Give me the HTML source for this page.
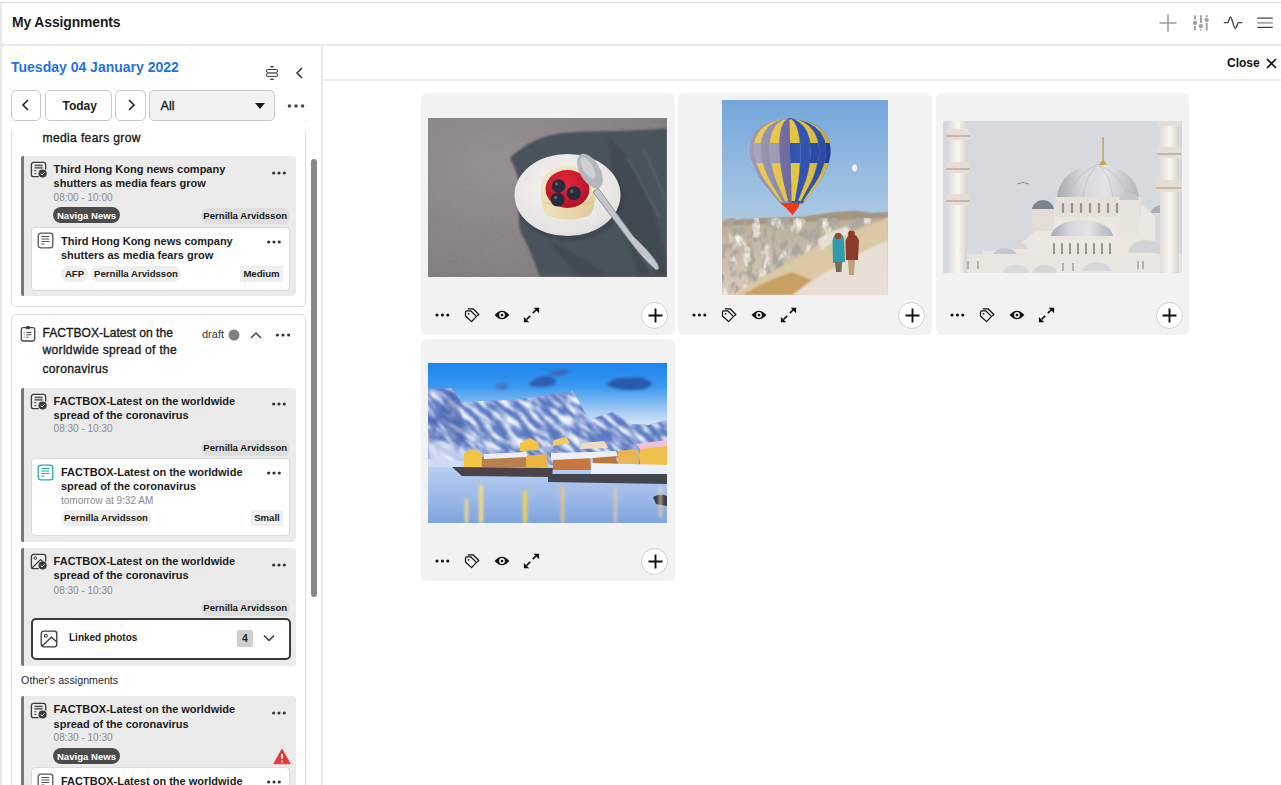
<!DOCTYPE html><html><head><meta charset="utf-8"><style>
html,body{margin:0;padding:0;}
body{width:1281px;height:785px;position:relative;overflow:hidden;background:#eaeaea;font-family:"Liberation Sans",sans-serif;}
.t{position:absolute;white-space:nowrap;}
.m{-webkit-text-stroke:0.35px currentColor;}
.b{position:absolute;box-sizing:border-box;}
</style></head><body>
<div class="b" style="left:0px;top:0px;width:1281px;height:2px;background:#fff"></div>
<div class="b" style="left:0px;top:2px;width:1281px;height:1px;background:#dcdcdc"></div>
<div class="b" style="left:2px;top:3px;width:1279px;height:41px;background:#fff;border-radius:0 0 0 3px"></div>
<div class="t " style="left:12px;top:14.24px;font-size:13.9px;line-height:16.68px;font-weight:700;color:#1c1c1c;letter-spacing:-0.1px">My Assignments</div>
<svg class="b" style="left:1158px;top:13px;" width="20" height="20" viewBox="0 0 20 20"><path d="M10 1.5V18.5M1.5 10H18.5" stroke="#9a9a9a" fill="none" stroke-width="1.6"/></svg>
<svg class="b" style="left:1192px;top:14px;" width="18" height="18" viewBox="0 0 18 18"><path d="M3 1.2V5.8M3 12.0V16.6" stroke="#a3a3a3" stroke-width="2"/><circle cx="3" cy="8.9" r="2.15" fill="#a3a3a3"/><path d="M8.9 1.2V9.1M8.9 15.3V16.6" stroke="#a3a3a3" stroke-width="2"/><circle cx="8.9" cy="12.2" r="2.15" fill="#a3a3a3"/><path d="M14.7 1.2V2.9M14.7 9.1V16.6" stroke="#a3a3a3" stroke-width="2"/><circle cx="14.7" cy="6" r="2.15" fill="#a3a3a3"/></svg>
<svg class="b" style="left:1223px;top:15px;" width="20" height="16" viewBox="0 0 20 16"><path d="M1.3 7.6H4.6C5.6 7.6 6.4 2 7.6 2C8.8 2 11 13.7 12.3 13.7C13.4 13.7 14.4 7.6 15.4 7.6H18.9" stroke="#444" fill="none" stroke-width="1.4" stroke-linecap="round"/></svg>
<svg class="b" style="left:1256px;top:16px;" width="18" height="14" viewBox="0 0 18 14"><path d="M1.2 2.2H16.8M1.2 11.4H16.8" stroke="#444" fill="none" stroke-width="1.3"/><path d="M1.2 6.8H16.8" stroke="#aaa" fill="none" stroke-width="2"/></svg>
<div class="b" style="left:2px;top:46px;width:319px;height:739px;background:#fff;border-radius:3px 3px 0 0"></div>
<div class="b" style="left:323px;top:46px;width:958px;height:739px;background:#fff;border-radius:3px 0 0 0"></div>
<div class="b" style="left:323px;top:79px;width:958px;height:2px;background:#ebebeb"></div>
<div class="t " style="left:1227px;top:55.84px;font-size:12px;line-height:14.4px;font-weight:700;color:#111;">Close</div>
<svg class="b" style="left:1266px;top:58px;" width="11" height="11" viewBox="0 0 11 11"><path d="M1 1L10 10M10 1L1 10" stroke="#111" stroke-width="1.7"/></svg>
<div class="t " style="left:11px;top:58.55px;font-size:14px;line-height:16.8px;font-weight:700;color:#2372e0;">Tuesday 04 January 2022</div>
<svg class="b" style="left:265px;top:65px;" width="14" height="16" viewBox="0 0 14 16"><path d="M4.5 1H9.5L7 3Z" fill="#444"/><path d="M4.5 15H9.5L7 13Z" fill="#444"/><rect x="1.5" y="4.5" width="11" height="3" rx="1.5" fill="none" stroke="#444" stroke-width="1.1"/><rect x="1.5" y="8.5" width="11" height="3" rx="1.5" fill="none" stroke="#444" stroke-width="1.1"/><rect x="2.5" y="7.3" width="9" height="1.4" fill="#999"/></svg>
<svg class="b" style="left:294px;top:66px;" width="10" height="14" viewBox="0 0 10 14"><path d="M8 2L3 7L8 12" fill="none" stroke="#333" stroke-width="1.5"/></svg>
<div class="b" style="left:11px;top:90px;width:30px;height:31px;background:#fff;border:1px solid #c8c8c8;border-radius:5px"></div>
<svg class="b" style="left:19px;top:98px;" width="14" height="14" viewBox="0 0 14 14"><path d="M9 2L4 7L9 12" fill="none" stroke="#222" stroke-width="1.6"/></svg>
<div class="b" style="left:45px;top:90px;width:67px;height:31px;background:#fff;border:1px solid #c8c8c8;border-radius:5px"></div>
<div class="t " style="left:62.5px;top:98.64px;font-size:12px;line-height:14.4px;font-weight:700;color:#1c1c1c;">Today</div>
<div class="b" style="left:115px;top:90px;width:31px;height:31px;background:#fff;border:1px solid #c8c8c8;border-radius:5px"></div>
<svg class="b" style="left:124px;top:98px;" width="14" height="14" viewBox="0 0 14 14"><path d="M5 2L10 7L5 12" fill="none" stroke="#222" stroke-width="1.6"/></svg>
<div class="b" style="left:149px;top:90px;width:126px;height:31px;background:#f2f2f2;border:1px solid #c8c8c8;border-radius:5px"></div>
<div class="t m" style="left:160.5px;top:98.88px;font-size:12.7px;line-height:15.24px;font-weight:400;color:#1c1c1c;">All</div>
<svg class="b" style="left:254px;top:102px;" width="12" height="8" viewBox="0 0 12 8"><path d="M1 1H11L6 7Z" fill="#1a1a1a"/></svg>
<svg class="b" style="left:286px;top:100.7px;" width="20" height="10" viewBox="0 0 20 10"><circle cx="3.4000000000000004" cy="5" r="1.7" fill="#444"/><circle cx="10.0" cy="5" r="1.7" fill="#444"/><circle cx="16.6" cy="5" r="1.7" fill="#444"/></svg>
<div class="b" style="left:11px;top:120px;width:295px;height:187px;border:1px solid #dcdcdc;border-top:none;border-radius:0 0 5px 5px"></div>
<div class="b" style="left:2px;top:121px;width:319px;height:10px;background:#fff"></div>
<div class="t m" style="left:42.5px;top:130.95px;font-size:12.1px;line-height:14.52px;font-weight:400;color:#1c1c1c;letter-spacing:0.35px">media fears grow</div>
<div class="b" style="left:21px;top:156px;width:275px;height:140px;background:#ebebeb;border-left:3px solid #777;border-radius:2px 4px 4px 2px"></div>
<svg class="b" style="left:29.8px;top:160.9px;" width="17" height="17" viewBox="0 0 17 17"><path d="M8.6 15.7H3.7A2.3 2.3 0 0 1 1.4 13.4V3.7A2.3 2.3 0 0 1 3.7 1.4H13.4A2.3 2.3 0 0 1 15.7 3.7V8.6" fill="none" stroke="#3a3a3a" stroke-width="1.3"/><path d="M4.5 4.4H12.6" stroke="#555" stroke-width="1.5"/><path d="M4.5 6.9H12.6M4.5 9.8H6.3M4.5 12.5H6.3" stroke="#3a3a3a" stroke-width="1.1"/><circle cx="12.6" cy="12.5" r="4.1" fill="#3a3a3a"/><path d="M10.7 12.6L12.1 13.9L14.5 11.3" fill="none" stroke="#fff" stroke-width="0.9"/></svg>
<div class="t " style="left:53.6px;top:163.19px;font-size:11px;line-height:13.2px;font-weight:700;color:#1c1c1c;">Third Hong Kong news company</div>
<div class="t " style="left:53.6px;top:177.09px;font-size:11px;line-height:13.2px;font-weight:700;color:#1c1c1c;">shutters as media fears grow</div>
<svg class="b" style="left:269px;top:167.7px;" width="20" height="10" viewBox="0 0 20 10"><circle cx="4.7" cy="5" r="1.6" fill="#333"/><circle cx="10.0" cy="5" r="1.6" fill="#333"/><circle cx="15.3" cy="5" r="1.6" fill="#333"/></svg>
<div class="t " style="left:53.6px;top:192.13px;font-size:10px;line-height:12.0px;font-weight:400;color:#8a8a8a;">08:00 - 10:00</div>
<div class="b" style="left:53px;top:207px;width:67px;height:16px;background:#4b4b4b;border-radius:8px"></div>
<div class="t" style="left:53px;top:207.7px;width:67px;height:16px;line-height:16px;text-align:center;font-size:9.6px;font-weight:700;color:#fff">Naviga News</div>
<div class="b" style="left:200.5px;top:207.5px;width:89.5px;height:16.0px;background:#dedede;border-radius:8px"></div>
<div class="t" style="left:200.5px;top:208.2px;width:89.5px;height:16px;line-height:16px;text-align:center;font-size:9.6px;font-weight:700;color:#1c1c1c">Pernilla Arvidsson</div>
<div class="b" style="left:31px;top:226.5px;width:259px;height:64.0px;background:#fff;border:1px solid #dadada;border-radius:4px"></div>
<svg class="b" style="left:36.7px;top:232px;" width="17" height="17" viewBox="0 0 17 17"><rect x="1.2" y="1.2" width="14.6" height="14.6" rx="2.6" fill="none" stroke="#555" stroke-width="1.3"/><path d="M4.3 4.5H12.3M4.3 7H12.3M4.3 9.5H12.3M4.3 12H7.5" stroke="#555" stroke-width="1.1"/></svg>
<div class="t " style="left:61px;top:235.19px;font-size:11px;line-height:13.2px;font-weight:700;color:#1c1c1c;">Third Hong Kong news company</div>
<div class="t " style="left:61px;top:249.39px;font-size:11px;line-height:13.2px;font-weight:700;color:#1c1c1c;">shutters as media fears grow</div>
<svg class="b" style="left:263.5px;top:237px;" width="20" height="10" viewBox="0 0 20 10"><circle cx="4.7" cy="5" r="1.6" fill="#333"/><circle cx="10.0" cy="5" r="1.6" fill="#333"/><circle cx="15.3" cy="5" r="1.6" fill="#333"/></svg>
<div class="b" style="left:61px;top:265.5px;width:27px;height:16.0px;background:#eeeeee;border-radius:8px"></div>
<div class="t" style="left:61px;top:266.2px;width:27px;height:16px;line-height:16px;text-align:center;font-size:9.6px;font-weight:700;color:#1c1c1c">AFP</div>
<div class="b" style="left:91px;top:265.5px;width:90px;height:16.0px;background:#eeeeee;border-radius:8px"></div>
<div class="t" style="left:91px;top:266.2px;width:90px;height:16px;line-height:16px;text-align:center;font-size:9.6px;font-weight:700;color:#1c1c1c">Pernilla Arvidsson</div>
<div class="b" style="left:240px;top:265.5px;width:43px;height:16.0px;background:#eeeeee;border-radius:0px"></div>
<div class="t" style="left:240px;top:266.2px;width:43px;height:16px;line-height:16px;text-align:center;font-size:9.6px;font-weight:700;color:#1c1c1c">Medium</div>
<div class="b" style="left:11px;top:314px;width:295px;height:486px;border:1px solid #dcdcdc;border-radius:5px"></div>
<svg class="b" style="left:20px;top:325px;" width="16" height="17" viewBox="0 0 16 17"><rect x="1.3" y="2.6" width="13.4" height="13.4" rx="1.8" fill="none" stroke="#444" stroke-width="1.3"/><rect x="6" y="1" width="4" height="3.2" rx="1" fill="#444"/><path d="M6.3 7.5H11.3M6.3 9.8H11.3M6.3 12.2H8.5" stroke="#444" stroke-width="1.1"/><path d="M3.6 7.5H5M3.6 9.8H5M3.6 12.2H5" stroke="#999" stroke-width="1"/></svg>
<div class="t m" style="left:42.5px;top:323.51px;font-size:12.1px;line-height:18px;font-weight:400;color:#1c1c1c;">FACTBOX-Latest on the</div>
<div class="t m" style="left:42.5px;top:341.41px;font-size:12.1px;line-height:18px;font-weight:400;color:#1c1c1c;letter-spacing:0.3px">worldwide spread of the</div>
<div class="t m" style="left:42.5px;top:359.51px;font-size:12.1px;line-height:18px;font-weight:400;color:#1c1c1c;letter-spacing:0.3px">coronavirus</div>
<div class="t " style="left:202px;top:327.59px;font-size:11px;line-height:13.2px;font-weight:400;color:#333;">draft</div>
<svg class="b" style="left:227.5px;top:329px;" width="12" height="12" viewBox="0 0 12 12"><circle cx="6" cy="6" r="5.5" fill="#7f7f7f"/></svg>
<svg class="b" style="left:249px;top:329px;" width="14" height="11" viewBox="0 0 14 11"><path d="M2 9L7 4L12 9" fill="none" stroke="#444" stroke-width="1.5"/></svg>
<svg class="b" style="left:273px;top:329.6px;" width="20" height="10" viewBox="0 0 20 10"><circle cx="4.4" cy="5" r="1.6" fill="#333"/><circle cx="10.0" cy="5" r="1.6" fill="#333"/><circle cx="15.6" cy="5" r="1.6" fill="#333"/></svg>
<div class="b" style="left:21px;top:387.5px;width:275px;height:154.0px;background:#ebebeb;border-left:3px solid #777;border-radius:2px 4px 4px 2px"></div>
<svg class="b" style="left:29.8px;top:392.9px;" width="17" height="17" viewBox="0 0 17 17"><path d="M8.6 15.7H3.7A2.3 2.3 0 0 1 1.4 13.4V3.7A2.3 2.3 0 0 1 3.7 1.4H13.4A2.3 2.3 0 0 1 15.7 3.7V8.6" fill="none" stroke="#3a3a3a" stroke-width="1.3"/><path d="M4.5 4.4H12.6" stroke="#555" stroke-width="1.5"/><path d="M4.5 6.9H12.6M4.5 9.8H6.3M4.5 12.5H6.3" stroke="#3a3a3a" stroke-width="1.1"/><circle cx="12.6" cy="12.5" r="4.1" fill="#3a3a3a"/><path d="M10.7 12.6L12.1 13.9L14.5 11.3" fill="none" stroke="#fff" stroke-width="0.9"/></svg>
<div class="t " style="left:53.6px;top:394.99px;font-size:11px;line-height:13.2px;font-weight:700;color:#1c1c1c;">FACTBOX-Latest on the worldwide</div>
<div class="t " style="left:53.6px;top:409.19px;font-size:11px;line-height:13.2px;font-weight:700;color:#1c1c1c;">spread of the coronavirus</div>
<svg class="b" style="left:269px;top:399px;" width="20" height="10" viewBox="0 0 20 10"><circle cx="4.7" cy="5" r="1.6" fill="#333"/><circle cx="10.0" cy="5" r="1.6" fill="#333"/><circle cx="15.3" cy="5" r="1.6" fill="#333"/></svg>
<div class="t " style="left:53.6px;top:423.24px;font-size:10px;line-height:12.0px;font-weight:400;color:#8a8a8a;">08:30 - 10:30</div>
<div class="b" style="left:200.5px;top:439.5px;width:89.5px;height:16.0px;background:#dedede;border-radius:8px"></div>
<div class="t" style="left:200.5px;top:440.2px;width:89.5px;height:16px;line-height:16px;text-align:center;font-size:9.6px;font-weight:700;color:#1c1c1c">Pernilla Arvidsson</div>
<div class="b" style="left:31px;top:457.5px;width:259px;height:78.0px;background:#fff;border:1px solid #dadada;border-radius:4px"></div>
<svg class="b" style="left:36.7px;top:464px;" width="17" height="17" viewBox="0 0 17 17"><rect x="1.2" y="1.2" width="14.6" height="14.6" rx="2.6" fill="none" stroke="#22a9b8" stroke-width="1.3"/><path d="M4.3 4.5H12.3M4.3 7H12.3M4.3 9.5H12.3M4.3 12H7.5" stroke="#22a9b8" stroke-width="1.1"/></svg>
<div class="t " style="left:61px;top:466.19px;font-size:11px;line-height:13.2px;font-weight:700;color:#1c1c1c;">FACTBOX-Latest on the worldwide</div>
<div class="t " style="left:61px;top:480.39px;font-size:11px;line-height:13.2px;font-weight:700;color:#1c1c1c;">spread of the coronavirus</div>
<svg class="b" style="left:263.5px;top:468.2px;" width="20" height="10" viewBox="0 0 20 10"><circle cx="4.7" cy="5" r="1.6" fill="#333"/><circle cx="10.0" cy="5" r="1.6" fill="#333"/><circle cx="15.3" cy="5" r="1.6" fill="#333"/></svg>
<div class="t " style="left:61px;top:495.14px;font-size:10px;line-height:12.0px;font-weight:400;color:#8a8a8a;">tomorrow at 9:32 AM</div>
<div class="b" style="left:61px;top:509.7px;width:90px;height:16.000000000000057px;background:#eeeeee;border-radius:8px"></div>
<div class="t" style="left:61px;top:510.4px;width:90px;height:16px;line-height:16px;text-align:center;font-size:9.6px;font-weight:700;color:#1c1c1c">Pernilla Arvidsson</div>
<div class="b" style="left:251px;top:509.7px;width:32px;height:16.000000000000057px;background:#eeeeee;border-radius:0px"></div>
<div class="t" style="left:251px;top:510.4px;width:32px;height:16px;line-height:16px;text-align:center;font-size:9.6px;font-weight:700;color:#1c1c1c">Small</div>
<div class="b" style="left:21px;top:548px;width:275px;height:117.5px;background:#ebebeb;border-left:3px solid #777;border-radius:2px 4px 4px 2px"></div>
<svg class="b" style="left:29.8px;top:552.9px;" width="17" height="17" viewBox="0 0 17 17"><path d="M8.6 15.7H3.7A2.3 2.3 0 0 1 1.4 13.4V3.7A2.3 2.3 0 0 1 3.7 1.4H13.4A2.3 2.3 0 0 1 15.7 3.7V8.6" fill="none" stroke="#3a3a3a" stroke-width="1.3"/><circle cx="5.3" cy="5.1" r="1.3" fill="none" stroke="#3a3a3a" stroke-width="1"/><path d="M1.8 15.3L10.6 6.6L15.2 11" fill="none" stroke="#3a3a3a" stroke-width="1.2"/><circle cx="12.6" cy="12.5" r="4.1" fill="#3a3a3a"/><path d="M10.7 12.6L12.1 13.9L14.5 11.3" fill="none" stroke="#fff" stroke-width="0.9"/></svg>
<div class="t " style="left:53.6px;top:555.09px;font-size:11px;line-height:13.2px;font-weight:700;color:#1c1c1c;">FACTBOX-Latest on the worldwide</div>
<div class="t " style="left:53.6px;top:569.29px;font-size:11px;line-height:13.2px;font-weight:700;color:#1c1c1c;">spread of the coronavirus</div>
<svg class="b" style="left:269px;top:560px;" width="20" height="10" viewBox="0 0 20 10"><circle cx="4.7" cy="5" r="1.6" fill="#333"/><circle cx="10.0" cy="5" r="1.6" fill="#333"/><circle cx="15.3" cy="5" r="1.6" fill="#333"/></svg>
<div class="t " style="left:53.6px;top:584.53px;font-size:10px;line-height:12.0px;font-weight:400;color:#8a8a8a;">08:30 - 10:30</div>
<div class="b" style="left:200.5px;top:599.5px;width:89.5px;height:16.0px;background:#dedede;border-radius:8px"></div>
<div class="t" style="left:200.5px;top:600.2px;width:89.5px;height:16px;line-height:16px;text-align:center;font-size:9.6px;font-weight:700;color:#1c1c1c">Pernilla Arvidsson</div>
<div class="b" style="left:30.5px;top:617.5px;width:260.5px;height:42.0px;background:#fff;border:2px solid #3a3a3a;border-radius:5px"></div>
<svg class="b" style="left:40px;top:629.5px;" width="18" height="18" viewBox="0 0 18 18"><rect x="1.2" y="1.2" width="15.6" height="15.6" rx="2.5" fill="none" stroke="#3a3a3a" stroke-width="1.3"/><circle cx="5.8" cy="5.8" r="1.5" fill="none" stroke="#3a3a3a" stroke-width="1.1"/><path d="M1.8 16.3L11.5 7.2L16.5 11.8" fill="none" stroke="#3a3a3a" stroke-width="1.3"/></svg>
<div class="t " style="left:69px;top:631.53px;font-size:10px;line-height:12.0px;font-weight:700;color:#1c1c1c;">Linked photos</div>
<div class="b" style="left:237px;top:630px;width:16px;height:17px;background:#cfcfcf;border-radius:2px"></div>
<div class="t" style="left:237px;top:630px;width:16px;line-height:17px;text-align:center;font-size:10.5px;font-weight:700;color:#222">4</div>
<svg class="b" style="left:262px;top:633.3px;" width="14" height="11" viewBox="0 0 14 11"><path d="M2 2.5L7 7.5L12 2.5" fill="none" stroke="#333" stroke-width="1.5"/></svg>
<div class="t " style="left:21.1px;top:674.07px;font-size:10.7px;line-height:12.84px;font-weight:400;color:#2a2a2a;">Other's assignments</div>
<div class="b" style="left:21px;top:695.7px;width:275px;height:104.29999999999995px;background:#ebebeb;border-left:3px solid #777;border-radius:2px 4px 4px 2px"></div>
<svg class="b" style="left:29.8px;top:701.9px;" width="17" height="17" viewBox="0 0 17 17"><path d="M8.6 15.7H3.7A2.3 2.3 0 0 1 1.4 13.4V3.7A2.3 2.3 0 0 1 3.7 1.4H13.4A2.3 2.3 0 0 1 15.7 3.7V8.6" fill="none" stroke="#3a3a3a" stroke-width="1.3"/><path d="M4.5 4.4H12.6" stroke="#555" stroke-width="1.5"/><path d="M4.5 6.9H12.6M4.5 9.8H6.3M4.5 12.5H6.3" stroke="#3a3a3a" stroke-width="1.1"/><circle cx="12.6" cy="12.5" r="4.1" fill="#3a3a3a"/><path d="M10.7 12.6L12.1 13.9L14.5 11.3" fill="none" stroke="#fff" stroke-width="0.9"/></svg>
<div class="t " style="left:53.6px;top:703.39px;font-size:11px;line-height:13.2px;font-weight:700;color:#1c1c1c;">FACTBOX-Latest on the worldwide</div>
<div class="t " style="left:53.6px;top:717.69px;font-size:11px;line-height:13.2px;font-weight:700;color:#1c1c1c;">spread of the coronavirus</div>
<svg class="b" style="left:269px;top:707.8px;" width="20" height="10" viewBox="0 0 20 10"><circle cx="4.7" cy="5" r="1.6" fill="#333"/><circle cx="10.0" cy="5" r="1.6" fill="#333"/><circle cx="15.3" cy="5" r="1.6" fill="#333"/></svg>
<div class="t " style="left:53.6px;top:731.53px;font-size:10px;line-height:12.0px;font-weight:400;color:#8a8a8a;">08:30 - 10:30</div>
<div class="b" style="left:53px;top:747.8px;width:67px;height:16.0px;background:#4b4b4b;border-radius:8px"></div>
<div class="t" style="left:53px;top:748.5px;width:67px;height:16px;line-height:16px;text-align:center;font-size:9.6px;font-weight:700;color:#fff">Naviga News</div>
<svg class="b" style="left:273px;top:747.5px;" width="18" height="17" viewBox="0 0 18 17"><path d="M9 1L17.3 15.8H0.7Z" fill="#e53935" stroke="#e53935" stroke-width="0.8" stroke-linejoin="round"/><path d="M9 6V11" stroke="#fff" stroke-width="1.8"/><circle cx="9" cy="13.4" r="1" fill="#fff"/></svg>
<div class="b" style="left:31px;top:767px;width:259px;height:33px;background:#fff;border:1px solid #dadada;border-radius:4px"></div>
<svg class="b" style="left:36.7px;top:773px;" width="17" height="17" viewBox="0 0 17 17"><rect x="1.2" y="1.2" width="14.6" height="14.6" rx="2.6" fill="none" stroke="#555" stroke-width="1.3"/><path d="M4.3 4.5H12.3M4.3 7H12.3M4.3 9.5H12.3M4.3 12H7.5" stroke="#555" stroke-width="1.1"/></svg>
<div class="t " style="left:61px;top:775.39px;font-size:11px;line-height:13.2px;font-weight:700;color:#1c1c1c;">FACTBOX-Latest on the worldwide</div>
<div class="t " style="left:61px;top:789.39px;font-size:11px;line-height:13.2px;font-weight:700;color:#1c1c1c;">spread of the coronavirus</div>
<svg class="b" style="left:263.5px;top:777px;" width="20" height="10" viewBox="0 0 20 10"><circle cx="4.7" cy="5" r="1.6" fill="#333"/><circle cx="10.0" cy="5" r="1.6" fill="#333"/><circle cx="15.3" cy="5" r="1.6" fill="#333"/></svg>
<div class="b" style="left:311px;top:159px;width:6px;height:438px;background:#888;border-radius:3px"></div>
<div class="b" style="left:421px;top:93px;width:253.60000000000002px;height:241.5px;background:#f2f2f2;border-radius:6px"></div>
<svg class="b" style="left:432px;top:309.7px;" width="22" height="10" viewBox="0 0 22 10"><circle cx="5.0" cy="5" r="1.55" fill="#111"/><circle cx="10.4" cy="5" r="1.55" fill="#111"/><circle cx="15.8" cy="5" r="1.55" fill="#111"/></svg>
<svg class="b" style="left:464px;top:306.7px;" width="16" height="16" viewBox="0 0 16 16"><path d="M1.5 5.2Q1.5 3.8 2.9 3.8H6.6L12.5 9.4L7.6 14.6L1.5 9Z" fill="none" stroke="#111" stroke-width="1.25" stroke-linejoin="round"/><circle cx="4.6" cy="6.8" r="0.85" fill="#111"/><path d="M3.8 1.8H9.1L14.8 7.5L13.3 9" fill="none" stroke="#111" stroke-width="1.25" stroke-linejoin="round"/></svg>
<svg class="b" style="left:494px;top:308.7px;" width="16" height="12" viewBox="0 0 16 12"><path d="M0.6 6Q8 -2.5 15.4 6Q8 14.5 0.6 6Z" fill="#111"/><circle cx="8" cy="6" r="2.9" fill="#f2f2f2"/><circle cx="8" cy="6" r="1.35" fill="#111"/></svg>
<svg class="b" style="left:523px;top:306.7px;" width="17" height="16" viewBox="0 0 17 16"><path d="M3.5 12.5L7.2 8.8M9.8 6.2L13.5 2.5" stroke="#111" stroke-width="1.7"/><path d="M10.6 0.8H16.1V6.3Z" fill="#111"/><path d="M0.9 9.9V15.2H6.2Z" fill="#111"/></svg>
<div class="b" style="left:641px;top:301.9px;width:27px;height:27.0px;background:#fff;border:1px solid #cfcfcf;border-radius:50%"></div>
<svg class="b" style="left:647.5px;top:307.9px;" width="15" height="15" viewBox="0 0 15 15"><path d="M7.5 0.5V14.5M0.5 7.5H14.5" stroke="#111" stroke-width="1.9"/></svg>
<div class="b" style="left:678.3px;top:93px;width:253.60000000000002px;height:241.5px;background:#f2f2f2;border-radius:6px"></div>
<svg class="b" style="left:689.3px;top:309.7px;" width="22" height="10" viewBox="0 0 22 10"><circle cx="5.0" cy="5" r="1.55" fill="#111"/><circle cx="10.4" cy="5" r="1.55" fill="#111"/><circle cx="15.8" cy="5" r="1.55" fill="#111"/></svg>
<svg class="b" style="left:721.3px;top:306.7px;" width="16" height="16" viewBox="0 0 16 16"><path d="M1.5 5.2Q1.5 3.8 2.9 3.8H6.6L12.5 9.4L7.6 14.6L1.5 9Z" fill="none" stroke="#111" stroke-width="1.25" stroke-linejoin="round"/><circle cx="4.6" cy="6.8" r="0.85" fill="#111"/><path d="M3.8 1.8H9.1L14.8 7.5L13.3 9" fill="none" stroke="#111" stroke-width="1.25" stroke-linejoin="round"/></svg>
<svg class="b" style="left:751.3px;top:308.7px;" width="16" height="12" viewBox="0 0 16 12"><path d="M0.6 6Q8 -2.5 15.4 6Q8 14.5 0.6 6Z" fill="#111"/><circle cx="8" cy="6" r="2.9" fill="#f2f2f2"/><circle cx="8" cy="6" r="1.35" fill="#111"/></svg>
<svg class="b" style="left:780.3px;top:306.7px;" width="17" height="16" viewBox="0 0 17 16"><path d="M3.5 12.5L7.2 8.8M9.8 6.2L13.5 2.5" stroke="#111" stroke-width="1.7"/><path d="M10.6 0.8H16.1V6.3Z" fill="#111"/><path d="M0.9 9.9V15.2H6.2Z" fill="#111"/></svg>
<div class="b" style="left:898.3px;top:301.9px;width:27.0px;height:27.0px;background:#fff;border:1px solid #cfcfcf;border-radius:50%"></div>
<svg class="b" style="left:904.8px;top:307.9px;" width="15" height="15" viewBox="0 0 15 15"><path d="M7.5 0.5V14.5M0.5 7.5H14.5" stroke="#111" stroke-width="1.9"/></svg>
<div class="b" style="left:935.8px;top:93px;width:253.5999999999999px;height:241.5px;background:#f2f2f2;border-radius:6px"></div>
<svg class="b" style="left:946.8px;top:309.7px;" width="22" height="10" viewBox="0 0 22 10"><circle cx="5.0" cy="5" r="1.55" fill="#111"/><circle cx="10.4" cy="5" r="1.55" fill="#111"/><circle cx="15.8" cy="5" r="1.55" fill="#111"/></svg>
<svg class="b" style="left:978.8px;top:306.7px;" width="16" height="16" viewBox="0 0 16 16"><path d="M1.5 5.2Q1.5 3.8 2.9 3.8H6.6L12.5 9.4L7.6 14.6L1.5 9Z" fill="none" stroke="#111" stroke-width="1.25" stroke-linejoin="round"/><circle cx="4.6" cy="6.8" r="0.85" fill="#111"/><path d="M3.8 1.8H9.1L14.8 7.5L13.3 9" fill="none" stroke="#111" stroke-width="1.25" stroke-linejoin="round"/></svg>
<svg class="b" style="left:1008.8px;top:308.7px;" width="16" height="12" viewBox="0 0 16 12"><path d="M0.6 6Q8 -2.5 15.4 6Q8 14.5 0.6 6Z" fill="#111"/><circle cx="8" cy="6" r="2.9" fill="#f2f2f2"/><circle cx="8" cy="6" r="1.35" fill="#111"/></svg>
<svg class="b" style="left:1037.8px;top:306.7px;" width="17" height="16" viewBox="0 0 17 16"><path d="M3.5 12.5L7.2 8.8M9.8 6.2L13.5 2.5" stroke="#111" stroke-width="1.7"/><path d="M10.6 0.8H16.1V6.3Z" fill="#111"/><path d="M0.9 9.9V15.2H6.2Z" fill="#111"/></svg>
<div class="b" style="left:1155.8px;top:301.9px;width:27.0px;height:27.0px;background:#fff;border:1px solid #cfcfcf;border-radius:50%"></div>
<svg class="b" style="left:1162.3px;top:307.9px;" width="15" height="15" viewBox="0 0 15 15"><path d="M7.5 0.5V14.5M0.5 7.5H14.5" stroke="#111" stroke-width="1.9"/></svg>
<div class="b" style="left:421px;top:339px;width:253.60000000000002px;height:241.5px;background:#f2f2f2;border-radius:6px"></div>
<svg class="b" style="left:432px;top:555.7px;" width="22" height="10" viewBox="0 0 22 10"><circle cx="5.0" cy="5" r="1.55" fill="#111"/><circle cx="10.4" cy="5" r="1.55" fill="#111"/><circle cx="15.8" cy="5" r="1.55" fill="#111"/></svg>
<svg class="b" style="left:464px;top:552.7px;" width="16" height="16" viewBox="0 0 16 16"><path d="M1.5 5.2Q1.5 3.8 2.9 3.8H6.6L12.5 9.4L7.6 14.6L1.5 9Z" fill="none" stroke="#111" stroke-width="1.25" stroke-linejoin="round"/><circle cx="4.6" cy="6.8" r="0.85" fill="#111"/><path d="M3.8 1.8H9.1L14.8 7.5L13.3 9" fill="none" stroke="#111" stroke-width="1.25" stroke-linejoin="round"/></svg>
<svg class="b" style="left:494px;top:554.7px;" width="16" height="12" viewBox="0 0 16 12"><path d="M0.6 6Q8 -2.5 15.4 6Q8 14.5 0.6 6Z" fill="#111"/><circle cx="8" cy="6" r="2.9" fill="#f2f2f2"/><circle cx="8" cy="6" r="1.35" fill="#111"/></svg>
<svg class="b" style="left:523px;top:552.7px;" width="17" height="16" viewBox="0 0 17 16"><path d="M3.5 12.5L7.2 8.8M9.8 6.2L13.5 2.5" stroke="#111" stroke-width="1.7"/><path d="M10.6 0.8H16.1V6.3Z" fill="#111"/><path d="M0.9 9.9V15.2H6.2Z" fill="#111"/></svg>
<div class="b" style="left:641px;top:547.9000000000001px;width:27px;height:27.0px;background:#fff;border:1px solid #cfcfcf;border-radius:50%"></div>
<svg class="b" style="left:647.5px;top:553.9000000000001px;" width="15" height="15" viewBox="0 0 15 15"><path d="M7.5 0.5V14.5M0.5 7.5H14.5" stroke="#111" stroke-width="1.9"/></svg>
<svg class="b" style="left:428px;top:118px;" width="239" height="159" viewBox="0 0 239 159"><defs>
<radialGradient id="c1bg" cx="0.3" cy="0.3" r="0.9"><stop offset="0" stop-color="#948e8f"/><stop offset="1" stop-color="#7c7678"/></radialGradient>
<radialGradient id="c1pl" cx="0.45" cy="0.4" r="0.7"><stop offset="0" stop-color="#f6f5f4"/><stop offset="0.8" stop-color="#e6e4e3"/><stop offset="1" stop-color="#d0cecd"/></radialGradient>
<radialGradient id="c1red" cx="0.45" cy="0.35" r="0.7"><stop offset="0" stop-color="#e6283c"/><stop offset="1" stop-color="#b01024"/></radialGradient>
<linearGradient id="c1cr" x1="0" y1="0" x2="1" y2="0"><stop offset="0" stop-color="#efe2bc"/><stop offset="1" stop-color="#e0cc98"/></linearGradient>
<filter id="c1b"><feGaussianBlur stdDeviation="1.2"/></filter>
<filter id="c1t"><feTurbulence type="fractalNoise" baseFrequency="0.35" numOctaves="2" seed="3"/><feColorMatrix type="matrix" values="0 0 0 0 0.5  0 0 0 0 0.5  0 0 0 0 0.5  0 0 0 0.25 0"/><feComposite in2="SourceGraphic" operator="in"/></filter>
</defs>
<rect width="239" height="159" fill="url(#c1bg)"/>
<rect width="239" height="159" fill="#000" filter="url(#c1t)" opacity="0.5"/>
<path d="M82 40C95 28 110 18 135 15C170 12 210 14 239 10V159H112C106 142 100 128 96 120C90 112 90 100 92 85C93 70 90 55 82 40Z" fill="#4a525c" filter="url(#c1b)"/>
<path d="M180 20C200 35 215 60 225 90C230 110 235 130 239 140V159H210C205 140 200 120 190 100Z" fill="#3c444e" opacity="0.6" filter="url(#c1b)"/>
<path d="M120 122C140 132 160 142 180 159H150C140 145 130 135 120 122Z" fill="#3a424c" opacity="0.5" filter="url(#c1b)"/>
<path d="M200 40C212 60 220 80 232 100M195 110C205 125 215 140 225 155M215 30C225 50 232 70 239 85" stroke="#5c6670" stroke-width="3" fill="none" opacity="0.6" filter="url(#c1b)"/>
<ellipse cx="142" cy="81" rx="54" ry="42" fill="#2f3338" opacity="0.35" filter="url(#c1b)"/>
<ellipse cx="139.5" cy="77" rx="53" ry="41" fill="url(#c1pl)"/>
<path d="M113 68Q112 94 120 98Q140 105 160 98Q168 94 167 68Z" fill="url(#c1cr)"/>
<path d="M115 84Q140 92 165 84" stroke="#d4bf88" stroke-width="0.8" fill="none"/>
<ellipse cx="140" cy="68" rx="27" ry="20" fill="#f0e4c0"/>
<ellipse cx="139.5" cy="71" rx="22" ry="19" fill="url(#c1red)"/>
<circle cx="130.6" cy="68" r="6.8" fill="#262c3c"/>
<circle cx="145.8" cy="75.3" r="7" fill="#262c3c"/>
<circle cx="129.6" cy="81.5" r="7" fill="#262c3c"/>
<circle cx="128.6" cy="66" r="1.8" fill="#5a6275"/><circle cx="143.8" cy="73.3" r="1.8" fill="#5a6275"/><circle cx="127.6" cy="79.5" r="1.8" fill="#5a6275"/>
<ellipse cx="162" cy="53" rx="10" ry="19" transform="rotate(-30 162 53)" fill="#b4b8be"/><ellipse cx="160" cy="50" rx="5" ry="12" transform="rotate(-30 160 50)" fill="#d8dade" opacity="0.7"/>
<path d="M170 70L205 118Q220 132 227 142Q234 152 228 152Q216 142 201 122L165 74Z" fill="#c3c6cb" stroke="#7d8188" stroke-width="0.8"/>
</svg>
<svg class="b" style="left:722px;top:100px;" width="166" height="195" viewBox="0 0 166 195"><defs>
<linearGradient id="p2s" x1="0" y1="0" x2="0" y2="1"><stop offset="0" stop-color="#74a6da"/><stop offset="0.45" stop-color="#9cc0e2"/><stop offset="1" stop-color="#d6e0e6"/></linearGradient>
<linearGradient id="p2sh" x1="0" y1="0" x2="1" y2="0"><stop offset="0" stop-color="#fff" stop-opacity="0.18"/><stop offset="0.5" stop-color="#fff" stop-opacity="0"/><stop offset="1" stop-color="#000" stop-opacity="0.15"/></linearGradient>
<filter id="p2b"><feGaussianBlur stdDeviation="1.2"/></filter>
<filter id="p2b2"><feGaussianBlur stdDeviation="0.5"/></filter>
</defs>
<rect width="166" height="195" fill="url(#p2s)"/>
<g filter="url(#p2b2)"><path d="M67.0 17.7 L47.2 22.0 L38.9 26.3 L34.0 30.6 L30.9 34.9 L28.6 39.1 L27.7 43.4 L27.2 47.7 L27.3 52.0 L28.1 56.3 L29.0 60.6 L30.8 64.9 L32.7 69.2 L35.0 73.5 L37.5 77.8 L40.5 82.0 L44.1 86.3 L47.6 90.6 L51.2 94.9 L54.7 99.2 L58.5 103.5 L59.8 103.5 L56.5 99.2 L53.3 94.9 L50.1 90.6 L47.0 86.3 L43.8 82.0 L41.2 77.8 L39.0 73.5 L36.9 69.2 L35.2 64.9 L33.6 60.6 L32.8 56.3 L32.1 52.0 L32.0 47.7 L32.4 43.4 L33.2 39.1 L35.2 34.9 L37.9 30.6 L42.2 26.3 L49.5 22.0 L67.0 17.7Z" fill="#8a86a6"/><path d="M67.0 17.7 L49.5 22.0 L42.2 26.3 L37.9 30.6 L35.2 34.9 L33.2 39.1 L32.4 43.4 L32.0 47.7 L32.1 52.0 L32.8 56.3 L33.6 60.6 L35.2 64.9 L36.9 69.2 L39.0 73.5 L41.2 77.8 L43.8 82.0 L47.0 86.3 L50.1 90.6 L53.3 94.9 L56.5 99.2 L59.8 103.5 L61.6 103.5 L58.9 99.2 L56.3 94.9 L53.8 90.6 L51.2 86.3 L48.6 82.0 L46.4 77.8 L44.6 73.5 L42.9 69.2 L41.5 64.9 L40.2 60.6 L39.5 56.3 L38.9 52.0 L38.8 47.7 L39.1 43.4 L39.7 39.1 L41.3 34.9 L43.5 30.6 L47.0 26.3 L52.8 22.0 L67.0 17.7Z" fill="#9a95b0"/><path d="M67.0 17.7 L52.8 22.0 L47.0 26.3 L43.5 30.6 L41.3 34.9 L39.7 39.1 L39.1 43.4 L38.8 47.7 L38.9 52.0 L39.5 56.3 L40.2 60.6 L41.5 64.9 L42.9 69.2 L44.6 73.5 L46.4 77.8 L48.6 82.0 L51.2 86.3 L53.8 90.6 L56.3 94.9 L58.9 99.2 L61.6 103.5 L64.0 103.5 L62.0 99.2 L60.2 94.9 L58.3 90.6 L56.5 86.3 L54.6 82.0 L53.0 77.8 L51.7 73.5 L50.5 69.2 L49.5 64.9 L48.5 60.6 L48.0 56.3 L47.5 52.0 L47.4 47.7 L47.6 43.4 L48.0 39.1 L49.1 34.9 L50.6 30.6 L53.0 26.3 L57.1 22.0 L67.0 17.7Z" fill="#8a86a6"/><path d="M67.0 17.7 L57.1 22.0 L53.0 26.3 L50.6 30.6 L49.1 34.9 L48.0 39.1 L47.6 43.4 L47.4 47.7 L47.5 52.0 L48.0 56.3 L48.5 60.6 L49.5 64.9 L50.5 69.2 L51.7 73.5 L53.0 77.8 L54.6 82.0 L56.5 86.3 L58.3 90.6 L60.2 94.9 L62.0 99.2 L64.0 103.5 L66.6 103.5 L65.6 99.2 L64.6 94.9 L63.5 90.6 L62.5 86.3 L61.5 82.0 L60.6 77.8 L59.9 73.5 L59.2 69.2 L58.6 64.9 L58.0 60.6 L57.7 56.3 L57.4 52.0 L57.3 47.7 L57.3 43.4 L57.5 39.1 L58.0 34.9 L58.7 30.6 L59.9 26.3 L61.9 22.0 L67.0 17.7Z" fill="#9a95b0"/><path d="M67.0 17.7 L61.9 22.0 L59.9 26.3 L58.7 30.6 L58.0 34.9 L57.5 39.1 L57.3 43.4 L57.3 47.7 L57.4 52.0 L57.7 56.3 L58.0 60.6 L58.6 64.9 L59.2 69.2 L59.9 73.5 L60.6 77.8 L61.5 82.0 L62.5 86.3 L63.5 90.6 L64.6 94.9 L65.6 99.2 L66.6 103.5 L69.5 103.5 L69.4 99.2 L69.2 94.9 L69.1 90.6 L69.0 86.3 L68.9 82.0 L68.8 77.8 L68.6 73.5 L68.5 69.2 L68.4 64.9 L68.2 60.6 L68.1 56.3 L68.0 52.0 L67.9 47.7 L67.8 43.4 L67.6 39.1 L67.5 34.9 L67.4 30.6 L67.2 26.3 L67.1 22.0 L67.0 17.7Z" fill="#6e6aa0"/><path d="M67.0 17.7 L67.1 22.0 L67.2 26.3 L67.4 30.6 L67.5 34.9 L67.6 39.1 L67.8 43.4 L67.9 47.7 L68.0 52.0 L68.1 56.3 L68.2 60.6 L68.4 64.9 L68.5 69.2 L68.6 73.5 L68.8 77.8 L68.9 82.0 L69.0 86.3 L69.1 90.6 L69.2 94.9 L69.4 99.2 L69.5 103.5 L72.4 103.5 L73.2 99.2 L73.9 94.9 L74.7 90.6 L75.5 86.3 L76.2 82.0 L76.9 77.8 L77.4 73.5 L77.8 69.2 L78.1 64.9 L78.5 60.6 L78.5 56.3 L78.6 52.0 L78.4 47.7 L78.2 43.4 L77.8 39.1 L77.0 34.9 L76.0 30.6 L74.6 26.3 L72.3 22.0 L67.0 17.7Z" fill="#3050b0"/><path d="M67.0 17.7 L72.3 22.0 L74.6 26.3 L76.0 30.6 L77.0 34.9 L77.8 39.1 L78.2 43.4 L78.4 47.7 L78.6 52.0 L78.5 56.3 L78.5 60.6 L78.1 64.9 L77.8 69.2 L77.4 73.5 L76.9 77.8 L76.2 82.0 L75.5 86.3 L74.7 90.6 L73.9 94.9 L73.2 99.2 L72.4 103.5 L75.0 103.5 L76.7 99.2 L78.3 94.9 L79.9 90.6 L81.5 86.3 L83.1 82.0 L84.5 77.8 L85.5 73.5 L86.5 69.2 L87.3 64.9 L88.0 60.6 L88.3 56.3 L88.5 52.0 L88.3 47.7 L87.9 43.4 L87.3 39.1 L85.9 34.9 L84.2 30.6 L81.5 26.3 L77.2 22.0 L67.0 17.7Z" fill="#2c4fb2"/><path d="M67.0 17.7 L77.2 22.0 L81.5 26.3 L84.2 30.6 L85.9 34.9 L87.3 39.1 L87.9 43.4 L88.3 47.7 L88.5 52.0 L88.3 56.3 L88.0 60.6 L87.3 64.9 L86.5 69.2 L85.5 73.5 L84.5 77.8 L83.1 82.0 L81.5 86.3 L79.9 90.6 L78.3 94.9 L76.7 99.2 L75.0 103.5 L77.4 103.5 L79.8 99.2 L82.2 94.9 L84.5 90.6 L86.8 86.3 L89.2 82.0 L91.1 77.8 L92.6 73.5 L94.1 69.2 L95.2 64.9 L96.3 60.6 L96.8 56.3 L97.1 52.0 L96.9 47.7 L96.4 43.4 L95.5 39.1 L93.7 34.9 L91.2 30.6 L87.5 26.3 L81.4 22.0 L67.0 17.7Z" fill="#2548a8"/><path d="M67.0 17.7 L81.4 22.0 L87.5 26.3 L91.2 30.6 L93.7 34.9 L95.5 39.1 L96.4 43.4 L96.9 47.7 L97.1 52.0 L96.8 56.3 L96.3 60.6 L95.2 64.9 L94.1 69.2 L92.6 73.5 L91.1 77.8 L89.2 82.0 L86.8 86.3 L84.5 90.6 L82.2 94.9 L79.8 99.2 L77.4 103.5 L79.2 103.5 L82.3 99.2 L85.2 94.9 L88.1 90.6 L91.0 86.3 L93.9 82.0 L96.3 77.8 L98.3 73.5 L100.1 69.2 L101.5 64.9 L102.9 60.6 L103.5 56.3 L103.9 52.0 L103.8 47.7 L103.1 43.4 L102.1 39.1 L99.8 34.9 L96.8 30.6 L92.3 26.3 L84.8 22.0 L67.0 17.7Z" fill="#2c4fb2"/><path d="M67.0 17.7 L84.8 22.0 L92.3 26.3 L96.8 30.6 L99.8 34.9 L102.1 39.1 L103.1 43.4 L103.8 47.7 L103.9 52.0 L103.5 56.3 L102.9 60.6 L101.5 64.9 L100.1 69.2 L98.3 73.5 L96.3 77.8 L93.9 82.0 L91.0 86.3 L88.1 90.6 L85.2 94.9 L82.3 99.2 L79.2 103.5 L80.5 103.5 L84.0 99.2 L87.3 94.9 L90.6 90.6 L93.9 86.3 L97.2 82.0 L100.0 77.8 L102.2 73.5 L104.3 69.2 L105.9 64.9 L107.5 60.6 L108.2 56.3 L108.7 52.0 L108.5 47.7 L107.8 43.4 L106.6 39.1 L104.1 34.9 L100.7 30.6 L95.6 26.3 L87.1 22.0 L67.0 17.7Z" fill="#2548a8"/><path d="M56.8 19.5 L50.0 21.9 L45.8 24.2 L42.1 26.6 L39.8 28.9 L37.5 31.2 L36.0 33.6 L34.9 36.0 L33.8 38.3 L32.9 40.6 L32.7 43.0 L38.9 43.0 L39.1 40.6 L39.7 38.3 L40.6 36.0 L41.5 33.6 L42.7 31.2 L44.6 28.9 L46.6 26.6 L49.6 24.2 L53.0 21.9 L58.6 19.5Z" fill="#e6c43c"/><path d="M34.7 63.0 L36.2 66.8 L37.7 70.6 L39.6 74.4 L41.6 78.2 L44.0 82.0 L46.7 85.8 L49.5 89.6 L52.3 93.4 L55.1 97.2 L57.9 101.0 L59.9 101.0 L57.6 97.2 L55.3 93.4 L53.0 89.6 L50.7 85.8 L48.4 82.0 L46.4 78.2 L44.7 74.4 L43.1 70.6 L41.9 66.8 L40.6 63.0Z" fill="#e6c43c"/><path d="M61.3 19.5 L57.5 21.9 L55.1 24.2 L53.1 26.6 L51.8 28.9 L50.5 31.2 L49.7 33.6 L49.1 36.0 L48.6 38.3 L48.1 40.6 L48.0 43.0 L56.9 43.0 L57.0 40.6 L57.2 38.3 L57.5 36.0 L57.8 33.6 L58.2 31.2 L58.8 28.9 L59.5 26.6 L60.6 24.2 L61.9 21.9 L63.9 19.5Z" fill="#e6c43c"/><path d="M49.4 63.0 L50.3 66.8 L51.2 70.6 L52.3 74.4 L53.5 78.2 L54.8 82.0 L56.5 85.8 L58.1 89.6 L59.7 93.4 L61.3 97.2 L62.9 101.0 L65.9 101.0 L64.9 97.2 L64.0 93.4 L63.1 89.6 L62.1 85.8 L61.2 82.0 L60.4 78.2 L59.7 74.4 L59.0 70.6 L58.5 66.8 L58.0 63.0Z" fill="#e6c43c"/><path d="M67.2 19.5 L67.3 21.9 L67.4 24.2 L67.6 26.6 L67.7 28.9 L67.8 31.2 L67.8 33.6 L67.9 36.0 L68.0 38.3 L68.1 40.6 L68.2 43.0 L77.7 43.0 L77.6 40.6 L77.2 38.3 L76.8 36.0 L76.4 33.6 L75.9 31.2 L75.2 28.9 L74.4 26.6 L73.3 24.2 L72.0 21.9 L70.0 19.5Z" fill="#e6c43c"/><path d="M68.7 63.0 L68.8 66.8 L68.9 70.6 L69.0 74.4 L69.1 78.2 L69.2 82.0 L69.3 85.8 L69.3 89.6 L69.4 93.4 L69.5 97.2 L69.6 101.0 L72.7 101.0 L73.4 97.2 L74.0 93.4 L74.7 89.6 L75.3 85.8 L76.0 82.0 L76.5 78.2 L76.9 74.4 L77.3 70.6 L77.6 66.8 L77.9 63.0Z" fill="#e6c43c"/><path d="M73.0 19.5 L77.1 21.9 L79.7 24.2 L81.9 26.6 L83.4 28.9 L84.9 31.2 L85.9 33.6 L86.6 36.0 L87.4 38.3 L88.0 40.6 L88.2 43.0 L96.0 43.0 L95.7 40.6 L94.9 38.3 L93.9 36.0 L92.9 33.6 L91.5 31.2 L89.5 28.9 L87.5 26.6 L84.4 24.2 L80.9 21.9 L75.3 19.5Z" fill="#e6c43c"/><path d="M87.9 63.0 L87.3 66.8 L86.6 70.6 L85.6 74.4 L84.6 78.2 L83.4 82.0 L82.0 85.8 L80.5 89.6 L79.1 93.4 L77.6 97.2 L76.2 101.0 L78.7 101.0 L80.8 97.2 L82.8 93.4 L84.9 89.6 L86.9 85.8 L89.0 82.0 L90.7 78.2 L92.0 74.4 L93.4 70.6 L94.4 66.8 L95.4 63.0Z" fill="#e6c43c"/><path d="M77.4 19.5 L84.5 21.9 L88.9 24.2 L92.7 26.6 L95.2 28.9 L97.7 31.2 L99.4 33.6 L100.6 36.0 L101.9 38.3 L102.9 40.6 L103.2 43.0 L107.5 43.0 L107.1 40.6 L106.0 38.3 L104.6 36.0 L103.2 33.6 L101.4 31.2 L98.6 28.9 L95.8 26.6 L91.5 24.2 L86.5 21.9 L78.7 19.5Z" fill="#e6c43c"/><path d="M102.4 63.0 L101.1 66.8 L99.8 70.6 L98.1 74.4 L96.3 78.2 L94.1 82.0 L91.5 85.8 L88.9 89.6 L86.3 93.4 L83.8 97.2 L81.1 101.0 L82.5 101.0 L85.5 97.2 L88.4 93.4 L91.3 89.6 L94.3 85.8 L97.2 82.0 L99.6 78.2 L101.6 74.4 L103.6 70.6 L105.1 66.8 L106.5 63.0Z" fill="#e6c43c"/>
<path d="M67 17.7C90 17.7 108 30 108 50C108 68 92 88 80 103.5L58.5 103.5C46 88 26 68 26.5 50C26.5 30 44 17.7 67 17.7Z" fill="url(#p2sh)"/>
<path d="M58 103H78L76 108L70.5 115L64 108Z" fill="#ee3a14"/>
</g>
<ellipse cx="132.5" cy="68" rx="2.6" ry="3.4" fill="#eef0f2"/>
<defs><filter id="p2rock" x="0" y="0" width="1" height="1"><feTurbulence type="fractalNoise" baseFrequency="0.12 0.07" numOctaves="3" seed="5"/><feColorMatrix type="matrix" values="0 0 0 0 0.42  0 0 0 0 0.38  0 0 0 0 0.34  -5 0 0 0 2.7"/><feGaussianBlur stdDeviation="0.6"/></filter>
<filter id="p2hi" x="0" y="0" width="1" height="1"><feTurbulence type="fractalNoise" baseFrequency="0.1 0.06" numOctaves="3" seed="9"/><feColorMatrix type="matrix" values="0 0 0 0 0.93  0 0 0 0 0.91  0 0 0 0 0.88  4 0 0 0 -2.3"/><feGaussianBlur stdDeviation="0.6"/></filter>
<linearGradient id="p2l" x1="0" y1="0" x2="0" y2="1"><stop offset="0" stop-color="#b8ab98"/><stop offset="1" stop-color="#d8ccbc"/></linearGradient></defs>
<path d="M0 121L40 118L80 117L100 114L115 112L135 111L150 113L166 112V195H0Z" fill="url(#p2l)"/>
<path d="M0 121L40 118L80 117L100 114L115 112L135 111L150 113L166 112V118L0 126Z" fill="#9a8c78" opacity="0.7" filter="url(#p2b)"/>
<clipPath id="p2rc"><path d="M0 118L166 112V122Q120 135 95 150Q60 170 30 195H0Z"/></clipPath><g clip-path="url(#p2rc)"><rect x="0" y="118" width="166" height="77" filter="url(#p2rock)"/><rect x="0" y="118" width="166" height="77" filter="url(#p2hi)"/></g>
<g filter="url(#p2b)">
<path d="M10 195Q60 165 100 145Q135 128 166 118V140Q130 160 95 195Z" fill="#dcc8a4"/>
<path d="M70 195Q115 162 166 140V195Z" fill="#e8e0d6"/>
<path d="M20 195Q45 180 70 172L90 180L70 195Z" fill="#c8a064"/>
<path d="M95 140Q110 130 125 126L130 132Q112 140 100 150Z" fill="#f0e8e0" opacity="0.8"/>
</g>
<g filter="url(#p2b2)">
<path d="M110.5 141Q112 133 117 133Q122 134 122 141L123 162L111 163Z" fill="#2f9cb0"/>
<circle cx="116" cy="136" r="3.2" fill="#9a4a2c"/>
<path d="M113 162H120L119.5 172H114Z" fill="#7a6a54"/>
<path d="M123.5 141Q126 134 130 134Q135 134 137 141L136 160L124 160Z" fill="#8c3c2a"/>
<circle cx="129.5" cy="134" r="3.4" fill="#8a3a22"/>
<path d="M126 160H133L132 175H127Z" fill="#c0a080"/>
</g>
</svg>
<svg class="b" style="left:943px;top:121px;" width="239" height="152" viewBox="0 0 239 152"><defs>
<linearGradient id="p3d" x1="0" y1="0" x2="1" y2="0"><stop offset="0" stop-color="#a6aab2"/><stop offset="0.3" stop-color="#d6d6da"/><stop offset="0.6" stop-color="#e4e4e6"/><stop offset="1" stop-color="#b0b4bc"/></linearGradient>
<linearGradient id="p3m" x1="0" y1="0" x2="1" y2="0"><stop offset="0" stop-color="#e2dcd6"/><stop offset="0.5" stop-color="#f8f6f2"/><stop offset="1" stop-color="#d8d2cc"/></linearGradient>
<filter id="p3b"><feGaussianBlur stdDeviation="0.5"/></filter>
</defs>
<rect width="239" height="152" fill="#d6d9dd"/>
<g filter="url(#p3b)">
<path d="M114 84L200 84L212 96V152H40V130L70 128L90 112L100 100Q100 88 114 84Z" fill="#ebe6e0"/>
<path d="M114 78A41 35 0 0 1 196 78Z" fill="url(#p3d)"/>
<path d="M125 77Q130 55 155 43M140 77Q142 55 155 43M170 77Q168 55 155 43M185 77Q180 55 155 43" stroke="#b8b8bc" stroke-width="0.6" fill="none"/>
<rect x="112" y="76" width="86" height="20" fill="#e6e0d8"/>
<path d="M120 82V92M129 82V92M138 82V92M147 82V92M156 82V92M165 82V92M174 82V92" stroke="#9c948a" stroke-width="2.2"/>
<path d="M156 44Q160 35 164 44Z" fill="#d0a850"/><rect x="159.4" y="16" width="1.4" height="28" fill="#c9a04a"/>
<path d="M89 89A11 10 0 0 1 111 89Z" fill="#7c8492"/><rect x="89" y="88" width="22" height="22" fill="#e2ddd6"/>
<path d="M176 80A10 9 0 0 1 196 80Z" fill="#c4c6cc"/><rect x="176" y="79" width="20" height="36" fill="#e8e3dc"/>
<path d="M108 116A31 17 0 0 1 170 116Z" fill="url(#p3d)"/>
<rect x="103" y="115" width="70" height="24" fill="#ebe6e0"/>
<path d="M111 122V134M119 122V134M127 122V134M135 122V134M143 122V134M151 122V134M159 122V134M167 122V134" stroke="#9c948a" stroke-width="2"/>
<path d="M185 132A18 13 0 0 1 221 132Z" fill="#d2d3d6"/>
<path d="M17 152A17 12 0 0 1 51 152Z" fill="#dcdcde"/>
<path d="M50 135A12 8 0 0 1 74 135Z" fill="#c4c8ce"/>
<path d="M65 128A10 7 0 0 1 85 128Z M40 138A8 5 0 0 1 56 138Z" fill="#d8d8dc"/>
<rect x="20" y="133" width="219" height="19" fill="#eae5de"/>
<path d="M25 140V148M35 140V148M120 142V150M130 142V150M200 140V148M195 140V148" stroke="#a8a096" stroke-width="1.5"/>
<path d="M60 152A13 8 0 0 1 86 152ZM140 150A14 9 0 0 1 168 150ZM90 152A12 8 0 0 1 114 152Z" fill="#d8d8da"/>
<path d="M208 92A12 8 0 0 1 232 92Z" fill="#8890a0" opacity="0.6"/>
<rect x="6" y="0" width="18" height="152" fill="url(#p3m)"/>
<rect x="3" y="8" width="24" height="11" rx="2" fill="#e4ded6"/><rect x="3" y="41" width="24" height="11" rx="2" fill="#e4ded6"/><rect x="3" y="73" width="24" height="11" rx="2" fill="#e4ded6"/>
<path d="M3 15H27M3 48H27M3 80H27" stroke="#b4aca2" stroke-width="1.5"/>
<rect x="217" y="0" width="19" height="152" fill="url(#p3m)"/>
<rect x="214" y="0" width="24" height="5" fill="#e4ded6"/><rect x="214" y="26" width="24" height="11" rx="2" fill="#e4ded6"/><rect x="213" y="59" width="25" height="12" rx="2" fill="#e4ded6"/>
<path d="M214 33H238M213 67H238" stroke="#b4aca2" stroke-width="1.5"/>
</g>
<path d="M74 63L80 61.5L86 63" stroke="#8a8a8a" stroke-width="0.9" fill="none"/>
</svg>
<svg class="b" style="left:428px;top:363px;" width="239" height="160" viewBox="0 0 239 160"><defs>
<linearGradient id="p4s" x1="0" y1="0" x2="0" y2="1"><stop offset="0" stop-color="#1a84ec"/><stop offset="0.15" stop-color="#3a9af0"/><stop offset="0.3" stop-color="#a4ccf4"/><stop offset="0.42" stop-color="#e8f0fa"/><stop offset="1" stop-color="#f0f4fb"/></linearGradient>
<linearGradient id="p4w" x1="0" y1="0" x2="0" y2="1"><stop offset="0" stop-color="#b8d0f2"/><stop offset="0.5" stop-color="#a0bcea"/><stop offset="1" stop-color="#7ea4dc"/></linearGradient>
<clipPath id="p4mc"><path d="M0 25.5L24 25.5L27 30L33 38.5L43 38.5L80 37L100 35L120 32L135 28.5L139 33L144 27L150 36L156 48L161 57L172 53L185 49L195 55L203 61L221 62L238 57L239 57V104H0Z"/></clipPath>
<filter id="p4snow" x="0" y="0" width="1" height="1"><feTurbulence type="fractalNoise" baseFrequency="0.05 0.2" numOctaves="4" seed="11"/><feColorMatrix type="matrix" values="0 0 0 0 0.92  0 0 0 0 0.95  0 0 0 0 1  3.2 0 0 0 -1.25"/><feGaussianBlur stdDeviation="0.9"/></filter>
<filter id="p4b"><feGaussianBlur stdDeviation="0.7"/></filter>
<filter id="p4b2"><feGaussianBlur stdDeviation="1.8"/></filter>
</defs>
<rect width="239" height="160" fill="url(#p4s)"/>
<g filter="url(#p4b2)">
<path d="M178 22Q185 13 200 15Q215 12 224 20Q222 27 205 27Q190 28 178 22Z" fill="#2a58aa"/>
<path d="M100 22Q108 12 122 13Q132 18 125 22Q112 26 100 22Z" fill="#2f5cb0"/>
<path d="M66 24Q72 18 80 21Q82 26 74 27Z" fill="#4a74bc"/>
<path d="M120 10Q128 5 142 7Q140 12 128 13Z" fill="#3a68b8"/>
</g>
<g clip-path="url(#p4mc)">
<rect width="239" height="110" fill="#5a78c2"/>
<g transform="rotate(40 120 60)"><rect x="-60" y="-80" width="360" height="280" filter="url(#p4snow)"/></g>
<path d="M0 75L30 82L50 95L0 104Z" fill="#e6eefa" opacity="0.7" filter="url(#p4b2)"/><path d="M22 28L30 40L38 70L30 90L18 70L12 45Z" fill="#3a54a0" opacity="0.45" filter="url(#p4b2)"/><path d="M0 45L10 55L6 80L0 82Z" fill="#3a54a0" opacity="0.4" filter="url(#p4b2)"/>

</g>
<rect x="0" y="102" width="239" height="58" fill="url(#p4w)"/>
<g filter="url(#p4b)">
<path d="M0 96L40 98L60 101L30 104L0 104Z" fill="#d0dcf2"/>
<path d="M92 80L102 75L110 79L111 87L92 88Z" fill="#f2c444"/>
<path d="M126 77L138 74L142 80L124 83Z" fill="#f2cc60"/>
<path d="M154 80L176 78L180 85L152 86Z" fill="#f0dcc0"/>
<path d="M212 84L239 80V103L212 103Z" fill="#f0c050"/>
<path d="M208 81L239 77V83L212 86Z" fill="#f0c0d8"/>
<path d="M36 90L45 86L54 91L54 104L36 104Z" fill="#f4c440"/>
<path d="M54 94L76 91L98 93L99 104L54 104Z" fill="#b88050"/>
<path d="M56 91L98 89L100 94L56 96Z" fill="#eceef6"/>
<path d="M98 93L118 91L120 104L98 104Z" fill="#eab444"/>
<path d="M125 95L162 93L163 107L125 107Z" fill="#c8783c"/>
<path d="M123 90L165 89L167 95L123 97Z" fill="#eef0f8"/>
<path d="M165 95L188 92L189 104L165 104Z" fill="#c07438"/>
<path d="M164 89L188 88L190 93L164 95Z" fill="#eceef6"/>
<path d="M190 88L210 86L211 101L190 101Z" fill="#e8b454"/>
<path d="M163 100L239 102V112L163 112Z" fill="#eaf0fa"/>
<path d="M24 104L125 105L124 114L34 113Z" fill="#4c4248"/>
<path d="M120 111L239 111V121L120 119Z" fill="#42444e"/>
<path d="M225 134Q232 130 239 133V143L228 141Z" fill="#3a3e48"/>
</g>
<g filter="url(#p4b2)">
<rect x="37" y="136" width="3" height="24" fill="#f6dc80"/>
<rect x="51" y="122" width="4" height="38" fill="#f6dc80"/>
<rect x="95" y="128" width="4" height="32" fill="#f8d448"/>
<rect x="133" y="122" width="3" height="38" fill="#f4c870" opacity="0.9"/>
<rect x="186" y="124" width="3" height="36" fill="#f0c8a8" opacity="0.8"/>
<rect x="231" y="124" width="3" height="30" fill="#f0d8a0" opacity="0.7"/>
</g>
</svg>
</body></html>
